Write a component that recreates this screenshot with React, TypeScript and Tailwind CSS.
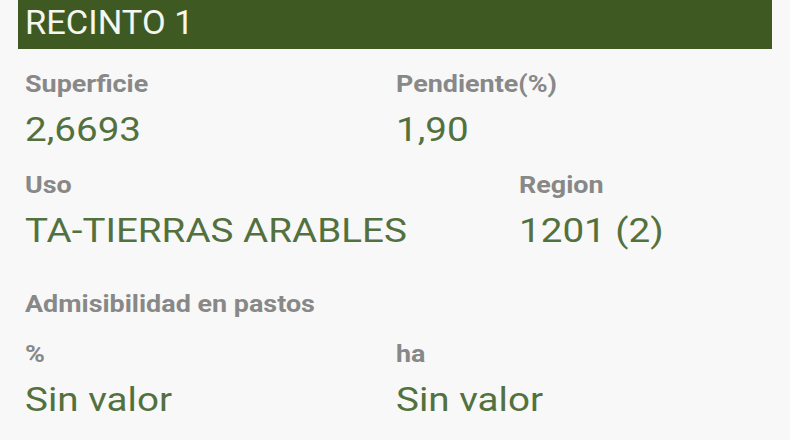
import React from "react";

const font = { fontFamily: "Roboto, 'Noto Sans', sans-serif" };

function Label({ children, className = "" }: { children: React.ReactNode; className?: string }) {
  return (
    <div className={"text-[23px] font-bold leading-[28px] text-[#888888] origin-left scale-x-[1.17] " + className}>
      {children}
    </div>
  );
}

function Value({ children }: { children: React.ReactNode }) {
  return (
    <div className="mt-[10px] text-[34px] leading-[40px] text-[#53713e] origin-left scale-x-[1.135]">
      {children}
    </div>
  );
}

function Field({ label, value }: { label: string; value: string }) {
  return (
    <div className="flex flex-col">
      <Label>{label}</Label>
      <Value>{value}</Value>
    </div>
  );
}

export default function App() {
  return (
    <div className="w-[790px] h-[440px] bg-[#f8f8f8] overflow-hidden" style={font}>
      <div className="mx-[18px] h-[49px] bg-[#3e5a22] flex items-center pl-[7px] pb-[4px]">
        <span className="text-[33px] leading-none text-[#f4f6ef] origin-left scale-x-[1.045] inline-block">
          RECINTO 1
        </span>
      </div>
      <div className="pl-[25px] pt-[22px]">
        <div className="grid grid-cols-[371px_1fr]">
          <Field label="Superficie" value="2,6693" />
          <Field label="Pendiente(%)" value="1,90" />
        </div>
        <div className="grid grid-cols-[494px_1fr] mt-[23px]">
          <Field label="Uso" value="TA-TIERRAS ARABLES" />
          <Field label="Region" value="1201 (2)" />
        </div>
        <Label className="mt-[41px]">Admisibilidad en pastos</Label>
        <div className="grid grid-cols-[371px_1fr] mt-[22px]">
          <Field label="%" value="Sin valor" />
          <Field label="ha" value="Sin valor" />
        </div>
      </div>
    </div>
  );
}
